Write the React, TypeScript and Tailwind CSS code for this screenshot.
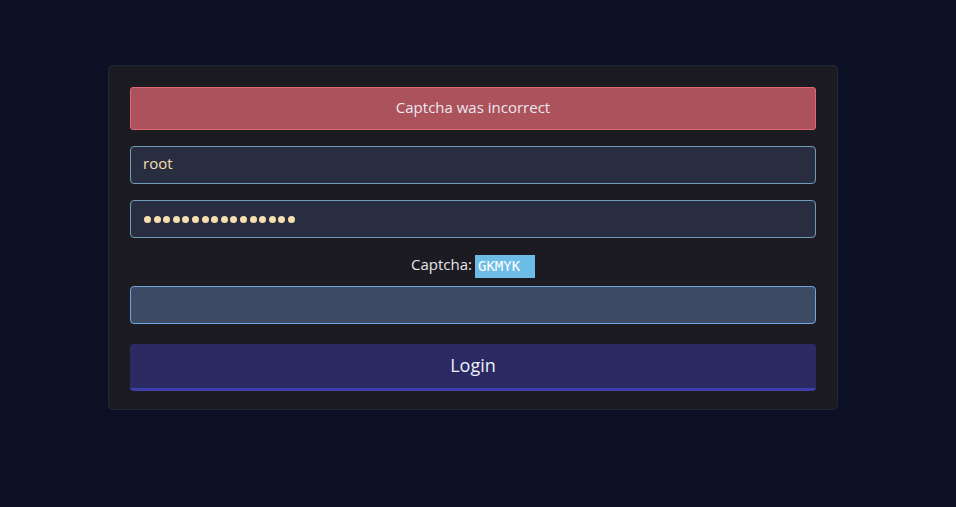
import React from "react";

export default function App() {
  const font = { fontFamily: '"Open Sans", "Noto Sans", sans-serif' };
  return (
    <div className="min-h-screen w-full bg-[#0b1024] pt-[65px]" style={font}>
      <div className="ml-[108px] w-[730px] rounded-[4px] border border-[#1f2638] bg-[#1b1b21] px-[21px] pt-[21px] pb-[18px]">
        <div className="flex h-[43px] items-center justify-center rounded-[3px] border border-[#e06872] bg-[#ab525a] pb-[2px] text-[15px] font-medium text-[#ece8f2]">
          Captcha was incorrect
        </div>
        <div className="mt-[16px] flex h-[38px] items-center rounded-[4px] border border-[#6f9cb6] bg-[#282d3f] px-[12px] pb-[3px] text-[15px] font-medium text-[#f8dfb0]">
          root
        </div>
        <div className="mt-[16px] flex h-[38px] items-center gap-[2.6px] rounded-[4px] border border-[#6f9cb6] bg-[#282d3f] px-[13px]">
          {Array.from({ length: 16 }).map((_, i) => (
            <span key={i} className="block h-[7px] w-[7px] shrink-0 rounded-full bg-[#f8dfb0]" />
          ))}
        </div>
        <div className="mt-[16px] flex h-[24px] items-center justify-center text-[15px] text-[#e8e4ec]">
          <span className="-mt-[3px] font-medium">Captcha:</span>
          <span
            className="ml-[3px] flex h-[23px] w-[60px] items-center bg-[#6cbce6] px-[3px] text-[14px] text-white"
            style={{ fontFamily: '"DejaVu Sans Mono", monospace' }}
          >
            GKMYK
          </span>
        </div>
        <div className="mt-[8px] h-[38px] rounded-[4px] border border-[#6fa6e0] bg-[#3d4a63]" />
        <button className="mt-[20px] flex h-[47px] w-full items-center justify-center rounded-[4px] border-b-[3px] border-[#3d3eab] bg-[#2c2a62] pb-[2px] text-[18px] font-medium text-[#eef0fa]">
          Login
        </button>
      </div>
    </div>
  );
}
